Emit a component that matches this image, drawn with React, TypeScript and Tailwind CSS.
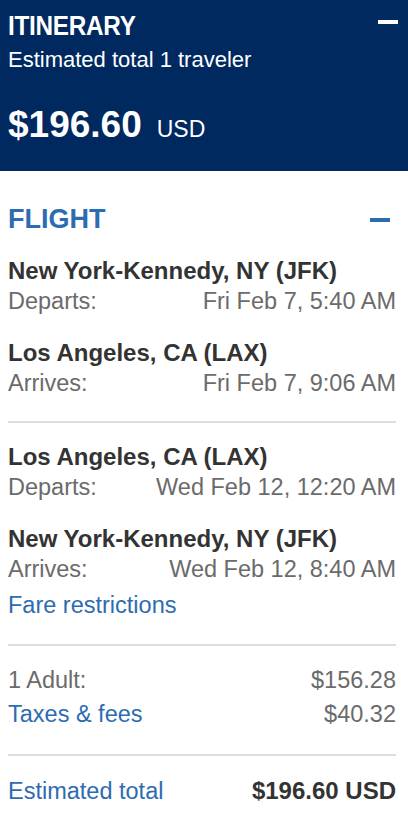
import React from "react";

const font = { fontFamily: '"Liberation Sans", Arial, sans-serif' };

function Segment({ name, label, date, className = "" }: { name: string; label: string; date: string; className?: string }) {
  return (
    <div className={className}>
      <div className="text-[24px] leading-[31px] font-bold text-[#333333] whitespace-nowrap">{name}</div>
      <div className="flex justify-between text-[23.5px] leading-[31px] text-[#6b6b6b] whitespace-nowrap">
        <span>{label}</span>
        <span>{date}</span>
      </div>
    </div>
  );
}

export default function App() {
  return (
    <div className="w-[408px] min-h-[822px] bg-white" style={font}>
      <div className="bg-[#00295f] text-white pl-2 pr-[10px] pt-[11px] pb-[26px]">
        <div className="flex justify-between items-start">
          <span className="inline-block text-[27px] leading-[30px] font-bold scale-x-90 origin-left tracking-[-0.3px]">ITINERARY</span>
          <span className="block w-[20px] h-[4px] bg-white mt-[9px]" />
        </div>
        <div className="mt-[6px] text-[22px] leading-[26px] whitespace-nowrap">Estimated total 1 traveler</div>
        <div className="mt-[32px] flex items-baseline h-[40px] whitespace-nowrap">
          <span className="text-[37px] leading-[40px] font-bold">$196.60</span>
          <span className="text-[23px] leading-[26px] ml-[15px]">USD</span>
        </div>
      </div>

      <div className="pl-2 pr-3">
        <div className="mt-[33px] flex justify-between items-start">
          <span className="text-[27px] leading-[30px] font-bold text-[#2d6cb0]">FLIGHT</span>
          <span className="block w-[20px] h-[4px] bg-[#2d6cb0] mt-[14px] mr-[6px]" />
        </div>

        <Segment className="mt-[21px]" name="New York-Kennedy, NY (JFK)" label="Departs:" date="Fri Feb 7, 5:40 AM" />
        <Segment className="mt-[20px]" name="Los Angeles, CA (LAX)" label="Arrives:" date="Fri Feb 7, 9:06 AM" />

        <div className="mt-[22px] h-[2px] bg-[#dddddd]" />

        <Segment className="mt-[18px]" name="Los Angeles, CA (LAX)" label="Departs:" date="Wed Feb 12, 12:20 AM" />
        <Segment className="mt-[20px]" name="New York-Kennedy, NY (JFK)" label="Arrives:" date="Wed Feb 12, 8:40 AM" />

        <div className="mt-[5px] text-[23.5px] leading-[31px] text-[#2d6cb0]">Fare restrictions</div>

        <div className="mt-[23px] h-[2px] bg-[#dddddd]" />

        <div className="mt-[19px] flex justify-between text-[23.5px] leading-[31px] text-[#6b6b6b]">
          <span>1 Adult:</span>
          <span>$156.28</span>
        </div>
        <div className="mt-[3px] flex justify-between text-[23.5px] leading-[31px]">
          <span className="text-[#2d6cb0]">Taxes &amp; fees</span>
          <span className="text-[#6b6b6b]">$40.32</span>
        </div>

        <div className="mt-[24px] h-[2px] bg-[#dddddd]" />

        <div className="mt-[19px] flex justify-between items-baseline text-[23.5px] leading-[31px] pb-4">
          <span className="text-[#2d6cb0]">Estimated total</span>
          <span className="text-[24px] font-bold text-[#333333]">$196.60 USD</span>
        </div>
      </div>
    </div>
  );
}
